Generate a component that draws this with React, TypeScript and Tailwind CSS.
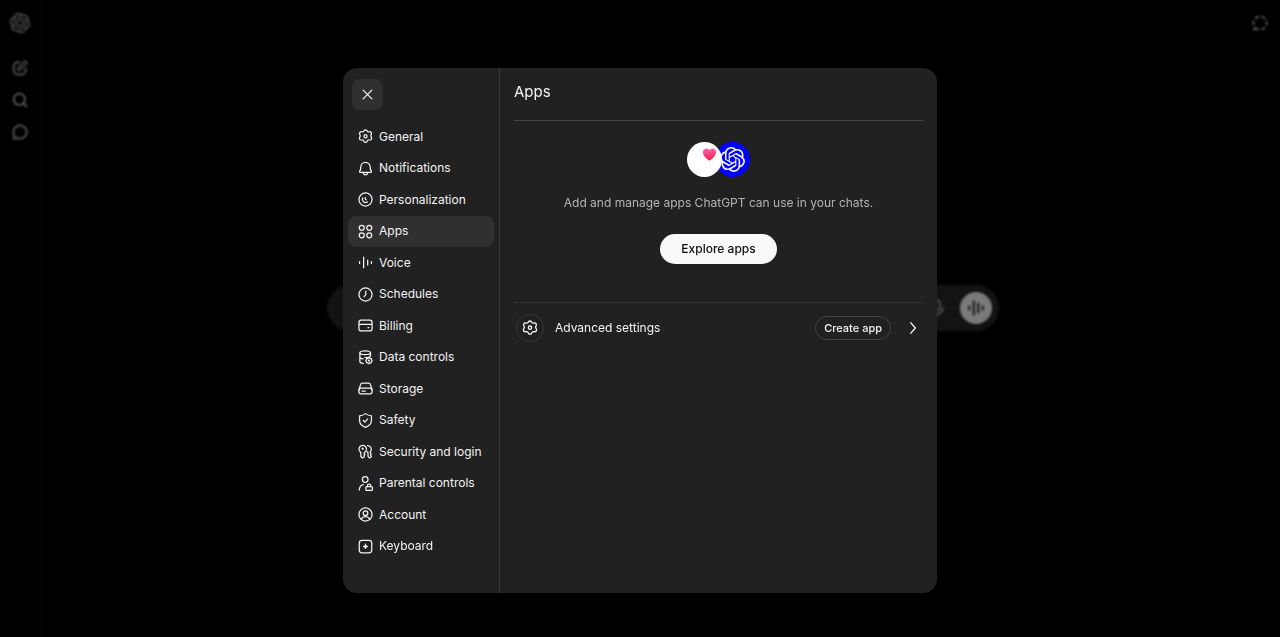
import type { ReactNode } from "react"
import { SiOpenai } from "react-icons/si"

type IconProps = { children: ReactNode; className?: string }

function Icon({ children, className = "size-[15px]" }: IconProps) {
  return (
    <svg
      viewBox="0 0 24 24"
      fill="none"
      stroke="currentColor"
      strokeWidth={2}
      strokeLinecap="round"
      strokeLinejoin="round"
      aria-hidden="true"
      className={`shrink-0 ${className}`}
    >
      {children}
    </svg>
  )
}

const gear = (
  <>
    <path d="M9.800 2.600 a2.800 2.800 0 0 1 4.400 0l.9 1.200a2 2 0 0 0 1.900.8l1.500-.2a2.800 2.800 0 0 1 2.800 3.900l-.6 1.400a2.300 2.300 0 0 0 0 2.200l.8 1.600a2.800 2.800 0 0 1-2.400 4.100l-1.900-.1a2 2 0 0 0-1.900.9l-1.100 1.800a2.800 2.800 0 0 1-4.400 0l-1.100-1.800a2 2 0 0 0-1.900-.9l-1.900.1a2.800 2.800 0 0 1-2.400-4.100l.8-1.600a2.300 2.300 0 0 0 0-2.200l-.6-1.400a2.800 2.800 0 0 1 2.800-3.900l1.500.2a2 2 0 0 0 1.900-.8Z" />
    <circle cx="12" cy="11.500" r="2.500" />
  </>
)

const waveform = <path d="M2.500 10.500v3M9 3.500v17M15.500 8v8M21.500 10.500v3" />

const SECTIONS: { label: string; icon: ReactNode }[] = [
  { label: "General", icon: gear },
  {
    label: "Notifications",
    icon: (
      <>
        <path d="M4.500 9.500a7.500 7.500 0 0 1 15 0c0 3.600.6 5 1.800 6.800.5.800.1 1.700-.8 1.700h-17c-.9 0-1.300-.9-.8-1.700 1.200-1.800 1.800-3.200 1.800-6.800Z" />
        <path d="M8 18.500c.6 2 2.100 3.600 4 3.600s3.400-1.600 4-3.600" />
      </>
    ),
  },
  {
    label: "Personalization",
    icon: (
      <>
        <circle cx="12" cy="12" r="10.500" />
        <path d="M7.500 9.500c-1 2.300-.4 4.600 1.200 6 1.700 1.500 4.300 1.800 6.500.5" />
        <path d="M11.500 8.500v2c0 1.200.8 2 2 2" />
      </>
    ),
  },
  {
    label: "Apps",
    icon: (
      <>
        <circle cx="6" cy="6" r="4" />
        <circle cx="18" cy="6" r="4" />
        <circle cx="6" cy="18" r="4" />
        <circle cx="18" cy="18" r="4" />
      </>
    ),
  },
  { label: "Voice", icon: waveform },
  {
    label: "Schedules",
    icon: (
      <>
        <circle cx="12" cy="12" r="10.500" />
        <path d="M12.500 6.500V12l-2.500 3.500" />
      </>
    ),
  },
  {
    label: "Billing",
    icon: (
      <>
        <rect x="1.500" y="3.500" width="21" height="17" rx="3.500" />
        <path d="M2 10h20M16 15.500h1.500" />
      </>
    ),
  },
  {
    label: "Data controls",
    icon: (
      <>
        <ellipse cx="11.500" cy="4.500" rx="8.500" ry="3" />
        <path d="M3 4.500v14c0 1.500 2 2.700 5.500 3M3 11.500c0 1.200 1.800 2.200 5 2.700M20 4.500v4.500M11 12c3.500 0 9-.5 9-3" />
        <path d="m17.500 12 1.600 1.300 2 .2.300 2 1.300 1.500-1.300 1.500-.3 2-2 .2-1.600 1.300-1.600-1.300-2-.2-.3-2-1.300-1.500 1.300-1.500.3-2 2-.2Z" />
        <circle cx="17.500" cy="17" r=".8" />
      </>
    ),
  },
  {
    label: "Storage",
    icon: (
      <>
        <path d="M1.500 14 4 6.200a3.500 3.500 0 0 1 3.300-2.700h9.400A3.500 3.500 0 0 1 20 6.200l2.500 7.800" />
        <path d="M5 11.500h14a3.500 3.500 0 0 1 3.500 3.500v2a3.500 3.500 0 0 1-3.500 3.500H5A3.500 3.500 0 0 1 1.500 17v-2A3.500 3.500 0 0 1 5 11.500ZM6.500 16h5" />
      </>
    ),
  },
  {
    label: "Safety",
    icon: (
      <>
        <path d="M12 1c2.500 2 5.700 3.200 9.500 3.500V12c0 5-3.700 8.800-9.500 11C6.200 20.800 2.500 17 2.500 12V4.500C6.300 4.200 9.500 3 12 1Z" />
        <path d="m8.500 12 2.500 2.500 4.500-5" />
      </>
    ),
  },
  {
    label: "Security and login",
    icon: (
      <>
        <path d="M4.500 13.300a6 6 0 1 1 6.500-.2l-1.500 2 1.500 1.900-1.500 2 .5 1.500-2.800 2-2.700-2.500Z" />
        <circle cx="7.500" cy="7.500" r=".8" />
        <path d="M15 2.500a6 6 0 0 1 4.500 10.300l1.500 2.700-1 2 1.500 2.500-3 2.300-2.500-2.500v-6.500a6 6 0 0 1-1.500-1" />
      </>
    ),
  },
  {
    label: "Parental controls",
    icon: (
      <>
        <circle cx="11.500" cy="5.500" r="4.500" />
        <path d="M2 22.500c.3-4.800 2.800-8 6.500-8.800" />
        <rect x="12.500" y="17" width="10.500" height="6" rx="1.500" />
        <path d="M15 17v-1.500a2.700 2.700 0 0 1 5.400 0V17" />
      </>
    ),
  },
  {
    label: "Account",
    icon: (
      <>
        <circle cx="12" cy="12" r="10.500" />
        <circle cx="12" cy="9.800" r="3.700" />
        <path d="M5 19.500c1.500-2.500 4-4 7-4s5.500 1.500 7 4" />
      </>
    ),
  },
  {
    label: "Keyboard",
    icon: (
      <>
        <rect x="2" y="2" width="20" height="20" rx="4.500" />
        <path d="m12 8 1.200 2.800L16 12l-2.800 1.200L12 16l-1.200-2.800L8 12l2.800-1.200Z" fill="currentColor" strokeWidth={1} />
      </>
    ),
  },
]

// The chat page that sits dimmed under the dialog
function ChatPage() {
  return (
    <div className="flex min-h-screen text-[#b8b8b8]">
      <nav
        aria-label="Sidebar"
        className="flex w-[43px] shrink-0 flex-col items-center border-r border-[#181818] pt-[13px] pr-0.5"
      >
        <a href="#home" aria-label="Home" className="mb-[27px]">
          <SiOpenai className="size-5" />
        </a>
        <div className="flex flex-col gap-4">
          <button type="button" aria-label="New chat">
            <Icon className="size-4">
              <path d="M11 3.500H8.500a6 6 0 0 0-6 6v6a6 6 0 0 0 6 6h6a6 6 0 0 0 6-6V13" strokeWidth={2.500} />
              <path d="m9 15 .8-4 8-8.200a2.300 2.300 0 0 1 3.400 3.400l-8.200 8Z" />
            </Icon>
          </button>
          <button type="button" aria-label="Search chats">
            <Icon className="size-4">
              <circle cx="11" cy="11" r="8.500" strokeWidth={2.500} />
              <path d="m17 17 5 5" strokeWidth={2.500} />
            </Icon>
          </button>
          <button type="button" aria-label="Chats">
            <Icon className="size-4">
              <path d="M12 2a10 10 0 1 1-4.500 18.900L2.500 22l1-5A10 10 0 0 1 12 2Z" strokeWidth={2.500} />
            </Icon>
          </button>
        </div>
      </nav>
      <main className="flex flex-1 flex-col">
        <header className="flex justify-end px-3 pt-[15px]">
          <button type="button" aria-label="Temporary chat">
            <Icon className="size-4">
              <circle cx="12" cy="12" r="10" strokeLinecap="butt" strokeWidth={2.500} strokeDasharray="7 3.470" strokeDashoffset="3.500" />
              <path d="m3.500 19-1 3h3.500" strokeLinecap="butt" />
            </Icon>
          </button>
        </header>
        <div className="mt-[254px] flex justify-center pl-0.5">
          <div className="flex h-[46px] w-full max-w-[672px] items-center justify-end gap-3.5 rounded-full bg-[#262626] pr-[7px]">
            <button type="button" aria-label="Dictate">
              <Icon className="size-[18px]">
                <rect x="8" y="2" width="8" height="13" rx="4" />
                <path d="M4 12a8 8 0 0 0 16 0M12 20v2.500" />
              </Icon>
            </button>
            <button
              type="button"
              aria-label="Voice mode"
              className="flex size-8 items-center justify-center rounded-full bg-[#f4f4f4] text-[#1a1a1a]"
            >
              <Icon className="size-[18px]">
                <path d="M3 10v4M9 3v18M15 6v12M21 10v4" strokeWidth={2.500} />
              </Icon>
            </button>
          </div>
        </div>
      </main>
    </div>
  )
}

function AppsPanel() {
  return (
    <section className="flex-1 px-3.5 pt-[13px]">
      <h2 id="settings-title" className="pb-[17px] text-[15px] leading-[22px]">Apps</h2>

      <div className="flex flex-col items-center border-t border-[#444444] pt-[21px]">
        <div className="flex items-center">
          <div className="z-10 flex size-[35px] items-start justify-end rounded-full bg-white pt-[5px] pr-[5px]">
            <svg viewBox="0 0 24 24" className="size-[15px]" aria-hidden="true">
              <defs>
                <linearGradient id="heart" x1="0" y1="0" x2="0" y2="1">
                  <stop offset="0" stopColor="#ff5fa8" />
                  <stop offset="1" stopColor="#f5224f" />
                </linearGradient>
              </defs>
              <path
                fill="url(#heart)"
                d="M12 22C7 18.500 1.500 14 1.500 8.300 1.500 5 4 2.500 7 2.500c2.200 0 4 1.200 5 3 1-1.800 2.800-3 5-3 3 0 5.500 2.500 5.500 5.800C22.500 14 17 18.500 12 22Z"
              />
            </svg>
          </div>
          <div className="-ml-[7px] flex size-[35px] items-center justify-center rounded-full bg-[#0000ff]">
            <SiOpenai className="size-[25px]" />
          </div>
        </div>
        <p className="pt-4 text-xs leading-5 text-[#b4b4b4]">Add and manage apps ChatGPT can use in your chats.</p>
        <button
          type="button"
          className="mt-[21px] h-[30px] rounded-full bg-[#f9f9f9] px-[21px] text-xs font-medium text-[#0d0d0d]"
        >
          Explore apps
        </button>
      </div>

      <div className="mt-[38px] flex items-center border-t border-[#303030] px-0.5 pt-[11px]">
        <span className="flex size-7 items-center justify-center rounded-full border border-[#383838]">
          <Icon className="size-4">{gear}</Icon>
        </span>
        <span className="flex-1 pl-[11px] text-xs">Advanced settings</span>
        <button type="button" className="h-6 rounded-full border border-[#424242] px-2 text-[11px] font-medium">
          Create app
        </button>
        <button type="button" aria-label="Open advanced settings" className="ml-3.5">
          <Icon className="size-4">
            <path d="m8.500 4 7 8-7 8" />
          </Icon>
        </button>
      </div>
    </section>
  )
}

export default function App() {
  return (
    <div className="relative min-h-screen bg-black font-['Inter','Liberation_Sans',sans-serif]">
      <ChatPage />

      <div className="fixed inset-0 flex items-center justify-center bg-black/50 pt-6 backdrop-blur-[1px]">
        <div
          role="dialog"
          aria-modal="true"
          aria-labelledby="settings-title"
          className="flex min-h-[525px] w-full max-w-[594px] overflow-hidden rounded-[14px] bg-[#212121] text-[#f3f3f3]"
        >
          <aside className="flex w-[157px] shrink-0 flex-col border-r border-[#3a3a3a] px-[5px] pt-[11px] pb-[31px]">
            <button
              type="button"
              aria-label="Close"
              className="mb-[11px] ml-1 flex size-[31px] items-center justify-center rounded-lg bg-[#2f2f2f]"
            >
              <Icon>
                <path d="m5 5 14 14M19 5 5 19" />
              </Icon>
            </button>
            <nav aria-label="Settings" className="flex flex-1 flex-col">
              {SECTIONS.map((s) => (
                <button
                  key={s.label}
                  type="button"
                  aria-current={s.label === "Apps" ? "page" : undefined}
                  className={`flex flex-1 items-center gap-1.5 rounded-lg px-2.5 text-xs whitespace-nowrap ${
                    s.label === "Apps" ? "bg-[#303030]" : "hover:bg-[#2a2a2a]"
                  }`}
                >
                  <Icon>{s.icon}</Icon>
                  {s.label}
                </button>
              ))}
            </nav>
          </aside>
          <AppsPanel />
        </div>
      </div>
    </div>
  )
}
